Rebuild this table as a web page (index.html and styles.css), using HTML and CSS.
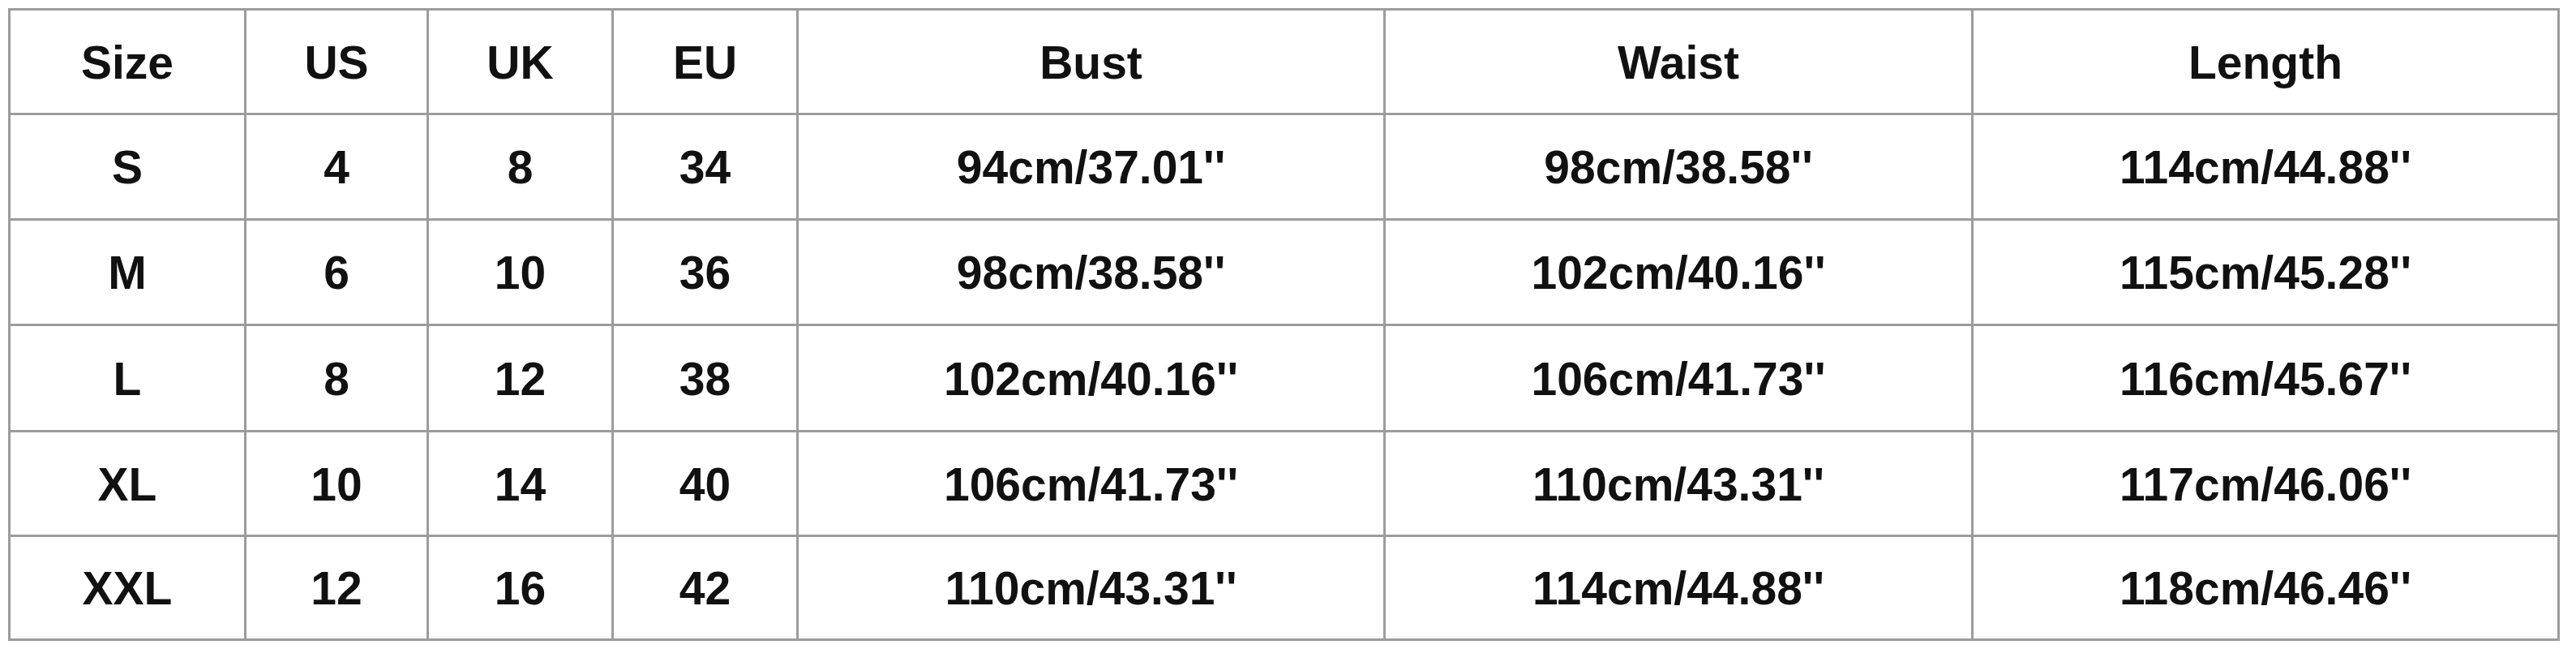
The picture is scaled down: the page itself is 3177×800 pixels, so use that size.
FILE: index.html
```html
<!DOCTYPE html>
<html lang="en">
<head>
<meta charset="utf-8">
<title>Size Chart</title>
<link rel="stylesheet" href="styles.css">
</head>
<body>
<div class="chart">
  <div class="cell">Size</div><div class="cell">US</div><div class="cell">UK</div><div class="cell">EU</div><div class="cell">Bust</div><div class="cell">Waist</div><div class="cell">Length</div>
  <div class="cell">S</div><div class="cell">4</div><div class="cell">8</div><div class="cell">34</div><div class="cell">94cm/37.01''</div><div class="cell">98cm/38.58''</div><div class="cell">114cm/44.88''</div>
  <div class="cell">M</div><div class="cell">6</div><div class="cell">10</div><div class="cell">36</div><div class="cell">98cm/38.58''</div><div class="cell">102cm/40.16''</div><div class="cell">115cm/45.28''</div>
  <div class="cell">L</div><div class="cell">8</div><div class="cell">12</div><div class="cell">38</div><div class="cell">102cm/40.16''</div><div class="cell">106cm/41.73''</div><div class="cell">116cm/45.67''</div>
  <div class="cell">XL</div><div class="cell">10</div><div class="cell">14</div><div class="cell">40</div><div class="cell">106cm/41.73''</div><div class="cell">110cm/43.31''</div><div class="cell">117cm/46.06''</div>
  <div class="cell">XXL</div><div class="cell">12</div><div class="cell">16</div><div class="cell">42</div><div class="cell">110cm/43.31''</div><div class="cell">114cm/44.88''</div><div class="cell">118cm/46.46''</div>
</div>
</body>
</html>
```
FILE: styles.css
```css
html, body {
  margin: 0;
  padding: 0;
  background: #ffffff;
}
body {
  padding: 10px 0 0 10px;
  font-family: "Liberation Sans", Arial, sans-serif;
}
.chart {
  display: grid;
  grid-template-columns: 291px 225px 228px 228px 724px 725px 723px;
  grid-template-rows: 129px 130px 130px 131px 129px 128px;
  width: max-content;
  border-top: 3px solid #9c9c9c;
  border-left: 3px solid #9c9c9c;
  box-shadow: 0 1px 0 #9c9c9c;
}
.cell {
  display: flex;
  align-items: center;
  justify-content: center;
  border-right: 3px solid #9c9c9c;
  border-bottom: 3px solid #9c9c9c;
  font-weight: 700;
  font-size: 57px;
  color: #111111;
  line-height: 1;
  padding-top: 2px;
}
```
